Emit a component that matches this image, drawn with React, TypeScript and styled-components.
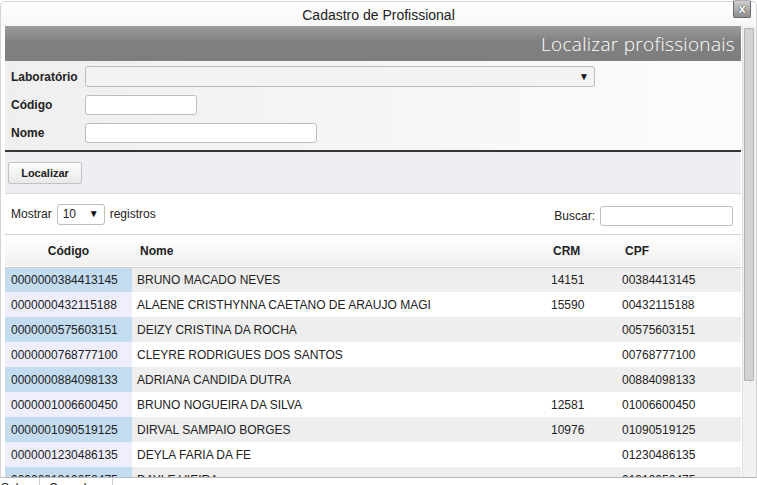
import React from "react";
import styled, { createGlobalStyle } from "styled-components";

const Global = createGlobalStyle`
  html, body { margin: 0; padding: 0; background: #ffffff; }
  body { font-family: "Liberation Sans", Arial, sans-serif; overflow: hidden; }
  * { box-sizing: border-box; }
`;

const Page = styled.div`
  width: 757px;
  height: 485px;
  padding-top: 1px;
  display: flex;
  flex-direction: column;
  overflow: hidden;
`;

const Dialog = styled.div`
  position: relative;
  width: 757px;
  height: 477px;
  flex: none;
  border: 1px solid #d4d4d4;
  border-bottom: 1px solid #b9b9b9;
  border-radius: 5px 5px 0 0;
  background: #ffffff;
  display: flex;
  flex-direction: column;
`;

const TitleBar = styled.div`
  height: 24px;
  flex: none;
  display: flex;
  align-items: center;
  justify-content: center;
  font-size: 14px;
  color: #222;
  background: linear-gradient(#ffffff, #f7f7f7);
  border-radius: 5px 5px 0 0;
  padding-top: 1px;
`;

const CloseButton = styled.div`
  position: absolute;
  top: -2px;
  right: 5px;
  width: 18px;
  height: 18px;
  border: 1px solid #6a6a6a;
  border-top-color: #b0b0b0;
  border-radius: 2px;
  background: linear-gradient(#cfcfcf, #8d8d8d);
  color: #fff;
  font-weight: bold;
  font-size: 13px;
  line-height: 15px;
  text-align: center;
  text-shadow: 0 0 1px #333, 0 0 1px #333;
`;

const Body = styled.div`
  flex: 1;
  display: flex;
  gap: 1px;
  padding-left: 4px;
  min-height: 0;
`;

const Content = styled.div`
  width: 736px;
  flex: none;
  overflow: hidden;
  display: flex;
  flex-direction: column;
`;

const ScrollTrack = styled.div`
  flex: 1;
  background: #f1f1f1;
  border-left: 1px solid #e2e2e2;
  padding: 2px 2px 0 1px;
`;

const ScrollThumb = styled.div`
  height: 353px;
  background: #d3d3d3;
  border: 1px solid #b3b3b3;
  border-radius: 1px;
`;

const Banner = styled.div`
  height: 35px;
  flex: none;
  display: flex;
  align-items: center;
  justify-content: flex-end;
  padding-right: 6px;
  background: linear-gradient(#9d9d9d, #808080 45%, #7e7e7e);
  color: #ffffff;
  font-family: "Open Sans", sans-serif;
  font-weight: 300;
  font-size: 19px;
  letter-spacing: 0.3px;
`;

const Form = styled.div`
  flex: none;
  display: grid;
  grid-template-columns: 74px auto;
  grid-template-rows: 21px 20px 20px;
  row-gap: 8px;
  justify-items: start;
  align-items: center;
  padding: 5px 0 7px 6px;
  background: linear-gradient(90deg, #efefef, #fcfcfc);
  border-bottom: 2px solid #353535;
`;

const Label = styled.label`
  font-size: 12px;
  font-weight: bold;
  color: #222;
`;

const SelectBox = styled.div<{ $w: number; $h: number; $bg: string }>`
  position: relative;
  width: ${(p) => p.$w}px;
  height: ${(p) => p.$h}px;
  border: 1px solid #bdbdbd;
  border-radius: 3px;
  background: ${(p) => p.$bg};
  font-size: 12px;
  color: #222;
  display: flex;
  align-items: center;
  padding-left: 5px;
`;

const Arrow = styled.span`
  position: absolute;
  right: 5px;
  top: 50%;
  transform: translateY(-50%);
  font-size: 10px;
  line-height: 10px;
  color: #111;
`;

const TextInput = styled.div<{ $w: number }>`
  width: ${(p) => p.$w}px;
  height: 20px;
  border: 1px solid #bdbdbd;
  border-radius: 3px;
  background: #ffffff;
`;

const ActionBar = styled.div`
  flex: none;
  height: 42px;
  padding: 10px 0 0 3px;
  background: #eeeff2;
  border-bottom: 1px solid #dadada;
`;

const Button = styled.div`
  width: 74px;
  height: 22px;
  border: 1px solid #c2c2c2;
  border-radius: 2px;
  background: linear-gradient(#fefefe, #e8e8e8);
  font-size: 11px;
  font-weight: bold;
  color: #222;
  display: flex;
  align-items: center;
  justify-content: center;
`;

const Toolbar = styled.div`
  flex: none;
  height: 41px;
  display: flex;
  align-items: center;
  justify-content: space-between;
  padding: 0 8px 0 6px;
  border-bottom: 1px solid #d0d0d0;
  font-size: 12px;
  color: #222;
`;

const ToolGroup = styled.div<{ $top: number }>`
  display: flex;
  align-items: center;
  gap: 5px;
  margin-top: ${(p) => p.$top}px;
`;

const Table = styled.table`
  width: 736px;
  table-layout: fixed;
  border-collapse: collapse;
  font-size: 12px;
  color: #222;
`;

const HeadRow = styled.tr`
  height: 32px;
  background: linear-gradient(#ffffff, #f0f0f0);
  border-bottom: 1px solid #cdcdcd;
`;

const Th = styled.th<{ $align?: string; $pad: number }>`
  font-weight: bold;
  text-align: ${(p) => p.$align || "left"};
  padding: 0 0 0 ${(p) => p.$pad}px;
  color: #222;
`;

const Row = styled.tr<{ $odd: boolean }>`
  height: 25px;
  background: ${(p) => (p.$odd ? "#eeeeee" : "#ffffff")};
`;

const CodeCell = styled.td<{ $odd: boolean }>`
  padding: 0 0 0 6px;
  background: ${(p) => (p.$odd ? "#c3dcef" : "#eeeefc")};
  white-space: nowrap;
  overflow: hidden;
`;

const Td = styled.td<{ $pad: number }>`
  padding: 0 0 0 ${(p) => p.$pad}px;
  white-space: nowrap;
  overflow: hidden;
`;

const Footer = styled.div`
  height: 7px;
  flex: none;
  display: flex;
  overflow: hidden;
`;

const FooterButton = styled.div<{ $w: number; $pad: number }>`
  width: ${(p) => p.$w}px;
  flex: none;
  overflow: hidden;
  white-space: nowrap;
  border-right: 1px solid #cfcfcf;
  font-size: 12px;
  line-height: 14px;
  padding: 3px 0 0 ${(p) => p.$pad}px;
  color: #222;
`;

const rows = [
  ["0000000384413145", "BRUNO MACADO NEVES", "14151", "00384413145"],
  ["0000000432115188", "ALAENE CRISTHYNNA CAETANO DE ARAUJO MAGI", "15590", "00432115188"],
  ["0000000575603151", "DEIZY CRISTINA DA ROCHA", "", "00575603151"],
  ["0000000768777100", "CLEYRE RODRIGUES DOS SANTOS", "", "00768777100"],
  ["0000000884098133", "ADRIANA CANDIDA DUTRA", "", "00884098133"],
  ["0000001006600450", "BRUNO NOGUEIRA DA SILVA", "12581", "01006600450"],
  ["0000001090519125", "DIRVAL SAMPAIO BORGES", "10976", "01090519125"],
  ["0000001230486135", "DEYLA FARIA DA FE", "", "01230486135"],
  ["0000001310052475", "DAYLE VIEIRA", "", "01310052475"],
];

export default function App() {
  return (
    <>
      <Global />
      <Page>
        <Dialog>
          <TitleBar>Cadastro de Profissional</TitleBar>
          <CloseButton>x</CloseButton>
          <Body>
            <Content>
              <Banner>Localizar profissionais</Banner>
              <Form>
                <Label>Laboratório</Label>
                <SelectBox $w={510} $h={21} $bg="#f3f3f3">
                  <Arrow>▼</Arrow>
                </SelectBox>
                <Label>Código</Label>
                <TextInput $w={112} />
                <Label>Nome</Label>
                <TextInput $w={232} />
              </Form>
              <ActionBar>
                <Button>Localizar</Button>
              </ActionBar>
              <Toolbar>
                <ToolGroup $top={0}>
                  <span>Mostrar</span>
                  <SelectBox $w={48} $h={21} $bg="#ffffff">
                    10
                    <Arrow>▼</Arrow>
                  </SelectBox>
                  <span>registros</span>
                </ToolGroup>
                <ToolGroup $top={4}>
                  <span>Buscar:</span>
                  <TextInput $w={133} />
                </ToolGroup>
              </Toolbar>
              <Table>
                <colgroup>
                  <col style={{ width: 127 }} />
                  <col style={{ width: 414 }} />
                  <col style={{ width: 71 }} />
                  <col style={{ width: 124 }} />
                </colgroup>
                <thead>
                  <HeadRow>
                    <Th $align="center" $pad={0}>Código</Th>
                    <Th $pad={8}>Nome</Th>
                    <Th $pad={7}>CRM</Th>
                    <Th $pad={8}>CPF</Th>
                  </HeadRow>
                </thead>
                <tbody>
                  {rows.map((r, i) => (
                    <Row key={r[0]} $odd={i % 2 === 0}>
                      <CodeCell $odd={i % 2 === 0}>{r[0]}</CodeCell>
                      <Td $pad={5}>{r[1]}</Td>
                      <Td $pad={5}>{r[2]}</Td>
                      <Td $pad={5}>{r[3]}</Td>
                    </Row>
                  ))}
                </tbody>
              </Table>
            </Content>
            <ScrollTrack>
              <ScrollThumb />
            </ScrollTrack>
          </Body>
        </Dialog>
        <Footer>
          <FooterButton $w={40} $pad={1}>Salvar</FooterButton>
          <FooterButton $w={73} $pad={9}>Cancelar</FooterButton>
        </Footer>
      </Page>
    </>
  );
}
